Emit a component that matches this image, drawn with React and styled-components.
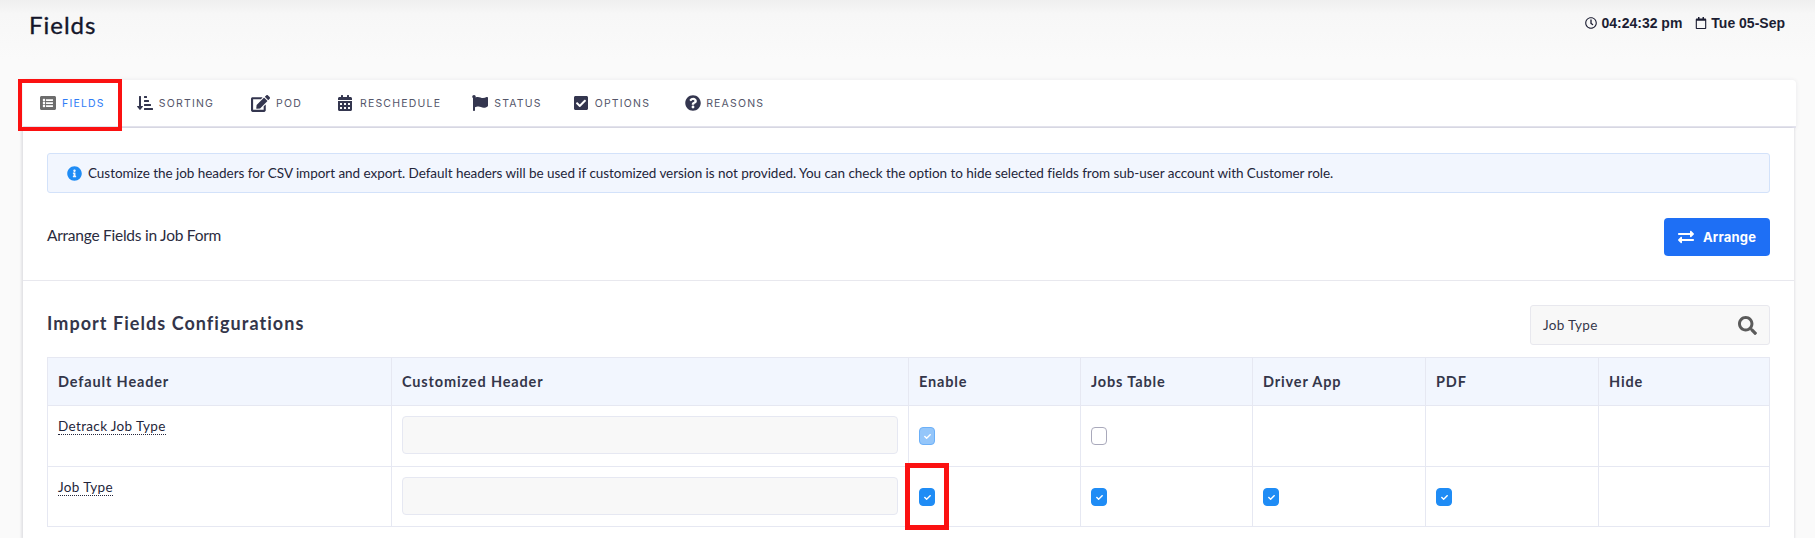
import React from "react";
import styled, { createGlobalStyle } from "styled-components";
import {
  FaListAlt, FaSortAmountDownAlt, FaEdit, FaCalendarAlt, FaFlag, FaCheckSquare,
  FaQuestionCircle, FaInfoCircle, FaSearch, FaExchangeAlt, FaRegClock, FaRegCalendar, FaCheck,
} from "react-icons/fa";

const Global = createGlobalStyle`
  html, body { margin: 0; padding: 0; height: 538px; overflow: hidden; background: #fafafa; }
  * { box-sizing: border-box; }
  body { font-family: "Lato", "Noto Sans", sans-serif; color: #2b2d42; }
`;

const Page = styled.div`
  height: 538px;
  overflow: hidden;
  background: linear-gradient(#efefef 0, #f7f7f7 14px, #fafafa 60px);
`;
const Header = styled.header`
  height: 80px;
  padding: 10px 30px 0 29px;
  display: flex;
  justify-content: space-between;
  align-items: flex-start;
`;
const Title = styled.h1`
  margin: 0;
  font-size: 24px;
  line-height: 30px;
  font-weight: 400;
  letter-spacing: 1px;
  -webkit-text-stroke: 0.35px #14162b;
  color: #14162b;
`;
const Clock = styled.div`
  display: flex;
  gap: 13px;
  padding-top: 4px;
  font-family: "Liberation Sans", sans-serif;
  font-weight: 700;
  font-size: 14px;
  line-height: 18px;
  color: #1c1e33;
`;
const ClockItem = styled.span`
  display: inline-flex;
  align-items: center;
  gap: 4px;
  svg { font-size: 12px; }
`;
const Card = styled.main`
  margin: 0 21px 0 23px;
`;
const Tabs = styled.nav`
  height: 48px;
  margin-right: -2px;
  background: #fff;
  border-radius: 4px 4px 0 0;
  border-bottom: 2px solid #e4e4ee;
  display: flex;
  align-items: center;
  padding-left: 17px;
  box-shadow: 0 0 4px rgba(40, 40, 70, 0.08);
`;
const Tab = styled.a`
  position: relative;
  display: inline-flex;
  align-items: center;
  gap: ${(p) => p.$gap}px;
  margin-right: ${(p) => p.$after}px;
  font-family: "Inter", sans-serif;
  font-size: 10.5px;
  letter-spacing: 1.2px;
  color: ${(p) => (p.$active ? "#2f7cf6" : "#55566a")};
  svg {
    font-size: ${(p) => p.$icon || 16}px;
    color: ${(p) => (p.$active ? "#6c6c6c" : "#34364f")};
  }
`;
const TabCallout = styled.span`
  position: absolute;
  left: -22px;
  top: -16px;
  width: 104px;
  height: 52px;
  border: 4px solid #fb1111;
`;
const Body = styled.section`
  background: #fff;
  padding: 25px 24px 0;
  height: 411px;
  box-shadow: -2px 0 2px rgba(40, 40, 70, 0.1), 1px 0 2px rgba(40, 40, 70, 0.1);
`;
const Alert = styled.div`
  height: 40px;
  display: flex;
  align-items: center;
  gap: 6px;
  padding-left: 19px;
  background: #f2f6fe;
  border: 1px solid #d3e2fa;
  border-radius: 3px;
  font-size: 13.5px;
  letter-spacing: -0.04px;
  color: #23253a;
  svg { color: #1f8cf5; font-size: 15px; }
`;
const ArrangeRow = styled.div`
  margin-top: 25px;
  height: 38px;
  display: flex;
  align-items: center;
  justify-content: space-between;
`;
const ArrangeLabel = styled.span`
  padding-bottom: 5px;
  font-size: 15.5px;
  letter-spacing: -0.25px;
  color: #2a2c40;
`;
const PrimaryButton = styled.button`
  width: 106px;
  height: 38px;
  display: inline-flex;
  align-items: center;
  justify-content: center;
  gap: 9px;
  background: #1e6ff5;
  color: #fff;
  border: 0;
  border-radius: 4px;
  font-family: "Inter", sans-serif;
  font-size: 13px;
  font-weight: 700;
  letter-spacing: 0.2px;
  svg { font-size: 16px; }
`;
const Divider = styled.hr`
  margin: 24px -24px 0;
  border: 0;
  border-top: 1px solid #e8e8ee;
`;
const TableHead = styled.div`
  margin-top: 24px;
  height: 40px;
  display: flex;
  align-items: center;
  justify-content: space-between;
`;
const SectionTitle = styled.h2`
  margin: 0;
  padding-bottom: 4px;
  font-size: 18px;
  font-weight: 700;
  letter-spacing: 1.05px;
  color: #34364a;
`;
const Search = styled.div`
  width: 240px;
  height: 40px;
  display: flex;
  align-items: center;
  justify-content: space-between;
  padding: 0 12px;
  background: #f8f8f8;
  border: 1px solid #e8e8ee;
  border-radius: 3px;
  font-size: 13.5px;
  letter-spacing: 0.3px;
  color: #34364a;
  svg { font-size: 19px; color: #5b5b5b; }
`;
const Table = styled.table`
  margin-top: 12px;
  width: 1722px;
  table-layout: fixed;
  border-collapse: collapse;
`;
const Col = styled.col`
  width: ${(p) => p.$w}px;
`;
const Th = styled.th`
  height: 48px;
  padding: 0 10px;
  text-align: left;
  background: #f2f6fe;
  border: 1px solid #e6e8f2;
  font-size: 14.5px;
  font-weight: 700;
  letter-spacing: 0.85px;
  color: #34364a;
`;
const Td = styled.td`
  position: relative;
  height: ${(p) => p.$h}px;
  padding: 10px;
  vertical-align: top;
  border: 1px solid #e6e8f2;
`;
const Hint = styled.span`
  display: block;
  width: fit-content;
  margin-top: 3px;
  font-size: 13.5px;
  line-height: 15px;
  letter-spacing: 0.35px;
  color: #23253a;
  border-bottom: 1px dotted #23253a;
`;
const TextInput = styled.div`
  height: 38px;
  background: #f8f8f8;
  border: 1px solid #e6e8f2;
  border-radius: 4px;
`;
const Check = styled.span`
  width: 16px;
  height: 18px;
  margin-top: 11px;
  border-radius: 4px;
  display: flex;
  align-items: center;
  justify-content: center;
  background: ${(p) => (p.$state === "on" ? "#1f8cf5" : p.$state === "off" ? "#fff" : "#94c6fa")};
  border: 1px solid ${(p) => (p.$state === "on" ? "#1f8cf5" : p.$state === "off" ? "#a9a9bb" : "#6cb0f8")};
  svg { font-size: 7px; color: #fff; }
`;
const CellCallout = styled.span`
  position: absolute;
  left: -4px;
  top: -4px;
  width: 44px;
  height: 67px;
  border: 5px solid #fb1111;
`;

const tabs = [
  { label: "FIELDS", Icon: FaListAlt, active: true, after: 32, gap: 6 },
  { label: "SORTING", Icon: FaSortAmountDownAlt, after: 37, gap: 6 },
  { label: "POD", Icon: FaEdit, after: 35, gap: 6, icon: 19 },
  { label: "RESCHEDULE", Icon: FaCalendarAlt, after: 31, gap: 7 },
  { label: "STATUS", Icon: FaFlag, after: 31, gap: 6 },
  { label: "OPTIONS", Icon: FaCheckSquare, after: 35, gap: 6 },
  { label: "REASONS", Icon: FaQuestionCircle, after: 0, gap: 5 },
];
const widths = [344, 517, 172, 172, 173, 173, 171];
const headers = ["Default Header", "Customized Header", "Enable", "Jobs Table", "Driver App", "PDF", "Hide"];
const rows = [
  { name: "Detrack Job Type", h: 61, checks: ["dim", "off", null, null] },
  { name: "Job Type", h: 60, callout: true, checks: ["on", "on", "on", "on"] },
];

export default function App() {
  return (
    <Page>
      <Global />
      <Header>
        <Title>Fields</Title>
        <Clock>
          <ClockItem><FaRegClock />04:24:32 pm</ClockItem>
          <ClockItem><FaRegCalendar />Tue 05-Sep</ClockItem>
        </Clock>
      </Header>
      <Card>
        <Tabs>
          {tabs.map(({ label, Icon, active, after, gap, icon }) => (
            <Tab key={label} $active={active} $after={after} $gap={gap} $icon={icon}>
              <Icon />
              {label}
              {active && <TabCallout />}
            </Tab>
          ))}
        </Tabs>
        <Body>
          <Alert>
            <FaInfoCircle />
            Customize the job headers for CSV import and export. Default headers will be used if customized version is not provided. You can check the option to hide selected fields from sub-user account with Customer role.
          </Alert>
          <ArrangeRow>
            <ArrangeLabel>Arrange Fields in Job Form</ArrangeLabel>
            <PrimaryButton><FaExchangeAlt />Arrange</PrimaryButton>
          </ArrangeRow>
          <Divider />
          <TableHead>
            <SectionTitle>Import Fields Configurations</SectionTitle>
            <Search>Job Type<FaSearch /></Search>
          </TableHead>
          <Table>
            <colgroup>
              {widths.map((w, i) => <Col key={i} $w={w} />)}
            </colgroup>
            <thead>
              <tr>{headers.map((h) => <Th key={h}>{h}</Th>)}</tr>
            </thead>
            <tbody>
              {rows.map((r) => (
                <tr key={r.name}>
                  <Td $h={r.h}><Hint>{r.name}</Hint></Td>
                  <Td $h={r.h}><TextInput /></Td>
                  {r.checks.map((c, i) => (
                    <Td key={i} $h={r.h}>
                      {c && <Check $state={c}>{c !== "off" && <FaCheck />}</Check>}
                      {r.callout && i === 0 && <CellCallout />}
                    </Td>
                  ))}
                  <Td $h={r.h} />
                </tr>
              ))}
            </tbody>
          </Table>
        </Body>
      </Card>
    </Page>
  );
}
